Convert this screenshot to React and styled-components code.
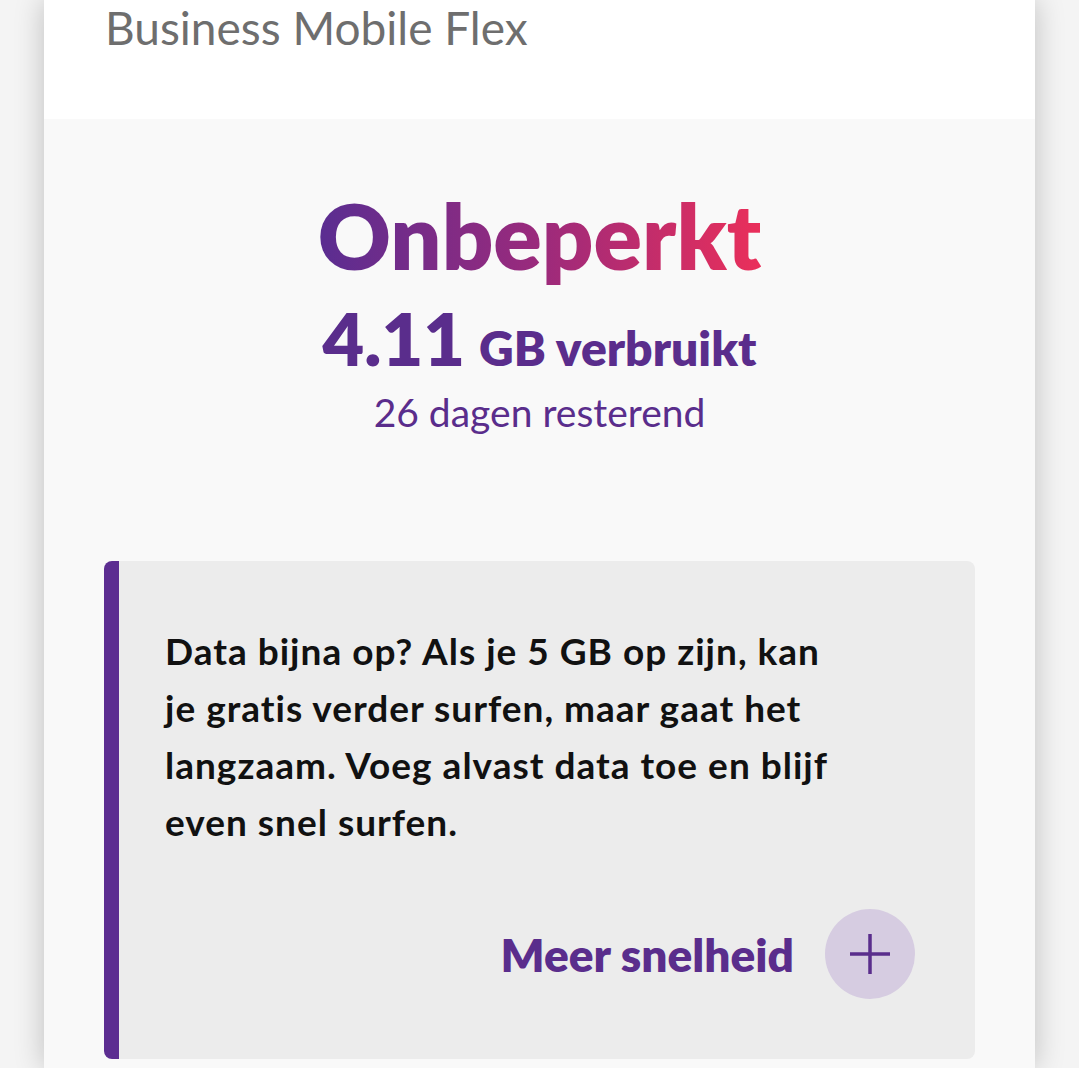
import React from "react"
import styled, { createGlobalStyle } from "styled-components"

const GlobalStyle = createGlobalStyle`
  html, body {
    margin: 0;
    padding: 0;
    background: #f4f4f4;
    font-family: Lato, "Noto Sans", sans-serif;
  }
`;

const Page = styled.div`
  height: 1068px;
  overflow: hidden;
  padding: 0 44px;
`;

const Card = styled.div`
  background: #f9f9f9;
  height: 100%;
  box-shadow: 0 0 28px rgba(0, 0, 0, 0.22);
`;

const Header = styled.div`
  background: #ffffff;
  height: 119px;
  padding: 0 61px;
  box-sizing: border-box;
`;

const PlanName = styled.h1`
  margin: 0;
  padding-top: 1px;
  font-size: 46px;
  line-height: 54px;
  font-weight: 400;
  color: #6e6e6e;
`;

const Usage = styled.section`
  display: flex;
  flex-direction: column;
  align-items: center;
  padding-top: 66px;
`;

const Headline = styled.div`
  font-size: 90px;
  line-height: 100px;
  font-weight: 800;
  background: linear-gradient(90deg, #5a2d91 0%, #9b2a7c 50%, #ea2f5a 100%);
  -webkit-background-clip: text;
  background-clip: text;
  color: transparent;
`;

const Amount = styled.div`
  display: flex;
  align-items: baseline;
  gap: 14px;
  color: #5a2d8c;
  font-weight: 800;
  margin-top: 13px;
`;

const Number = styled.span`
  font-size: 72px;
  line-height: 80px;
`;

const Unit = styled.span`
  font-size: 48px;
`;

const Remaining = styled.div`
  font-size: 39px;
  line-height: 48px;
  color: #5a2d8c;
  margin-top: 10px;
`;

const Notice = styled.div`
  margin: 125px 60px 0;
  background: #ececec;
  border-left: 15px solid #5c2d91;
  border-radius: 8px;
  padding: 61px 60px 60px 46px;
  height: 498px;
  box-sizing: border-box;
`;

const NoticeText = styled.p`
  margin: 0;
  font-size: 37px;
  line-height: 57px;
  font-weight: 700;
  letter-spacing: 1px;
  color: #111111;
  white-space: nowrap;
`;

const Action = styled.div`
  display: flex;
  justify-content: flex-end;
  align-items: center;
  gap: 31px;
  margin-top: 59px;
`;

const ActionLabel = styled.span`
  font-size: 46px;
  font-weight: 800;
  color: #5a2d8c;
`;

const RoundButton = styled.button`
  width: 90px;
  height: 90px;
  border-radius: 50%;
  border: none;
  background: #d6cce1;
  display: flex;
  align-items: center;
  justify-content: center;
  padding: 0;
  cursor: pointer;
`;

const PlusIcon = () => (
  <svg width="42" height="42" viewBox="0 0 42 42">
    <path d="M21 1v40M1 21h40" stroke="#5a2d8c" strokeWidth="3.5" fill="none" />
  </svg>
);

const lines = [
  "Data bijna op? Als je 5 GB op zijn, kan",
  "je gratis verder surfen, maar gaat het",
  "langzaam. Voeg alvast data toe en blijf",
  "even snel surfen.",
];

const App = () => {
  return (
    <>
      <GlobalStyle />
      <Page>
        <Card>
          <Header>
            <PlanName>Business Mobile Flex</PlanName>
          </Header>
          <Usage>
            <Headline>Onbeperkt</Headline>
            <Amount>
              <Number>4.11</Number>
              <Unit>GB verbruikt</Unit>
            </Amount>
            <Remaining>26 dagen resterend</Remaining>
          </Usage>
          <Notice>
            <NoticeText>
              {lines.map((line, i) => (
                <React.Fragment key={i}>
                  {line}
                  {i < lines.length - 1 && <br />}
                </React.Fragment>
              ))}
            </NoticeText>
            <Action>
              <ActionLabel>Meer snelheid</ActionLabel>
              <RoundButton aria-label="Meer snelheid">
                <PlusIcon />
              </RoundButton>
            </Action>
          </Notice>
        </Card>
      </Page>
    </>
  )
}

export default App;
